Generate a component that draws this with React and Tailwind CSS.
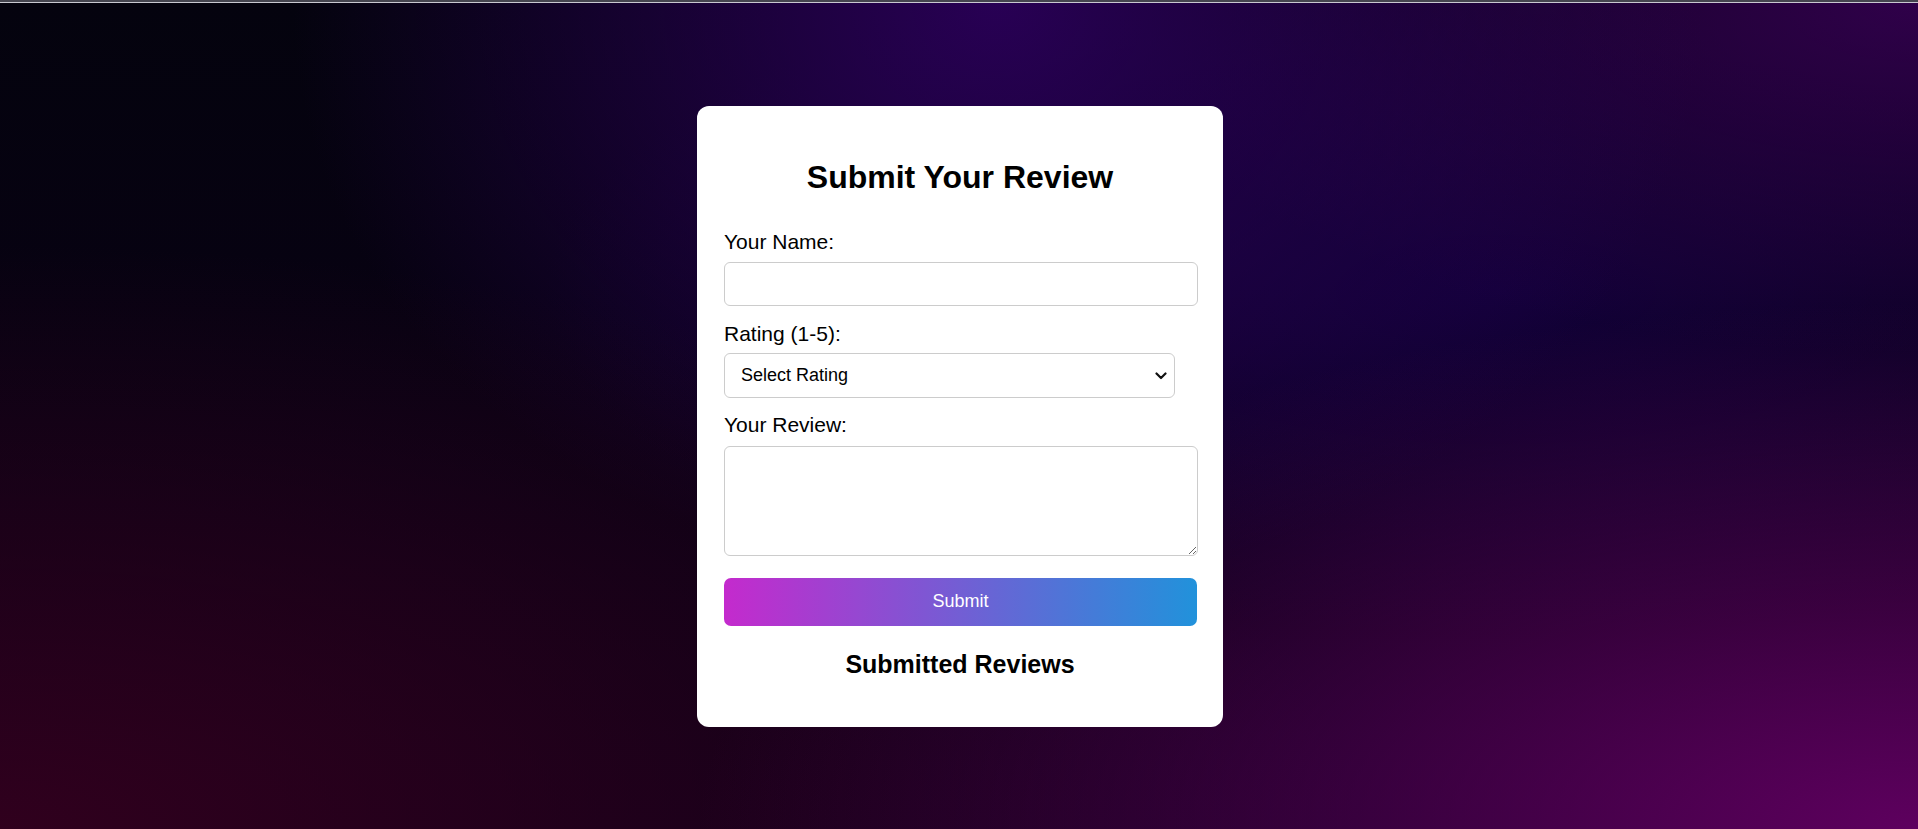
import React, { useState } from "react";

export default function App() {
  const [name, setName] = useState("");
  const [rating, setRating] = useState("");
  const [review, setReview] = useState("");

  return (
    <div className="h-screen flex flex-col font-['Liberation_Sans',Arial,sans-serif] text-black">
      {/* top edge lines */}
      <div className="h-[2px] bg-[#45454f]" />
      <div className="h-px bg-[#c9c9d1]" />

      {/* Background */}
      <div className="flex-1 flex items-center justify-center bg-[radial-gradient(ellipse_at_100%_100%,rgba(98,0,98,0.95)_0%,rgba(98,0,98,0)_45%),radial-gradient(ellipse_at_0%_100%,rgba(52,0,30,0.9)_0%,rgba(52,0,30,0)_50%),radial-gradient(ellipse_at_52%_0%,rgba(42,0,88,0.95)_0%,rgba(42,0,88,0)_50%),radial-gradient(ellipse_at_100%_0%,rgba(52,0,80,0.9)_0%,rgba(52,0,80,0)_30%),radial-gradient(ellipse_at_78%_35%,rgba(20,0,62,0.9)_0%,rgba(20,0,62,0)_45%),linear-gradient(180deg,#04030e_0%,#0c0018_100%)]">
        <div className="ml-[2px] w-[526px] bg-white rounded-[12px] pt-[53px] pb-[48px] px-[27px]">
          <h1 className="text-[32px] leading-[37px] font-bold text-center">
            Submit Your Review
          </h1>

          <label className="block mt-[34px] text-[21px] leading-[24px]">
            Your Name:
          </label>
          <input
            type="text"
            value={name}
            onChange={(e) => setName(e.target.value)}
            className="block mt-[8px] h-[44px] w-[474px] border border-[#cccccc] rounded-[6px] px-[12px] text-[18px] outline-none"
          />

          <label className="block mt-[16px] text-[21px] leading-[24px]">
            Rating (1-5):
          </label>
          <div className="relative mt-[7px] w-[451px]">
            <select
              value={rating}
              onChange={(e) => setRating(e.target.value)}
              className="block h-[45px] w-[451px] appearance-none border border-[#cccccc] rounded-[6px] pl-[16px] text-[18px] bg-white text-black outline-none"
            >
              <option value="">Select Rating</option>
              <option value="1">1</option>
              <option value="2">2</option>
              <option value="3">3</option>
              <option value="4">4</option>
              <option value="5">5</option>
            </select>
            <svg
              className="absolute right-[8px] top-[19px] pointer-events-none"
              width="12"
              height="8"
              viewBox="0 0 12 8"
              fill="none"
            >
              <path d="M1.5 1.5 6 6l4.5-4.5" stroke="#111" strokeWidth="2.2" strokeLinecap="round" strokeLinejoin="round" />
            </svg>
          </div>

          <label className="block mt-[15px] text-[21px] leading-[24px]">
            Your Review:
          </label>
          <textarea
            value={review}
            onChange={(e) => setReview(e.target.value)}
            className="block mt-[9px] h-[110px] w-[474px] border border-[#cccccc] rounded-[6px] p-[12px] text-[18px] outline-none resize-y"
          />

          <button
            type="button"
            className="block mt-[22px] h-[48px] w-[473px] rounded-[7px] bg-[linear-gradient(to_right,#c42acd,#2192db)] text-white text-[18px]"
          >
            Submit
          </button>

          <h2 className="mt-[24px] text-[25px] leading-[29px] font-bold text-center">
            Submitted Reviews
          </h2>
        </div>
      </div>
    </div>
  );
}
